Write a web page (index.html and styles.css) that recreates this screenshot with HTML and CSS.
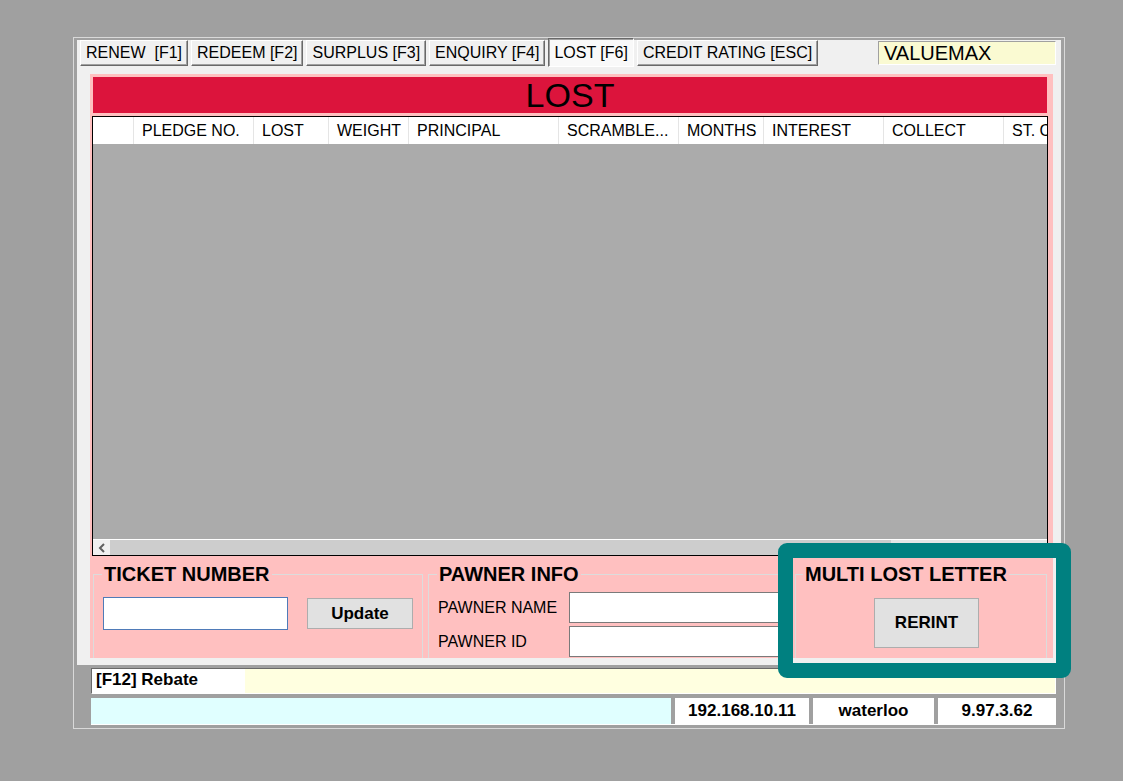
FILE: index.html
```html
<!DOCTYPE html>
<html>
<head>
<meta charset="utf-8">
<title>LOST</title>
<link rel="stylesheet" href="styles.css">
</head>
<body>
<div class="window">
  <div class="tabctl">
    <div class="tabstrip">
      <div class="tab">RENEW  [F1]</div>
      <div class="tab">REDEEM [F2]</div>
      <div class="tab">SURPLUS [F3]</div>
      <div class="tab">ENQUIRY [F4]</div>
      <div class="tab active">LOST [F6]</div>
      <div class="tab">CREDIT RATING [ESC]</div>
      <div class="brand">VALUEMAX</div>
    </div>
    <div class="page">
      <div class="panel">
        <div class="title">LOST</div>
        <div class="grid">
          <div class="ghead">
            <div class="col c0"></div>
            <div class="col c1">PLEDGE NO.</div>
            <div class="col c2">LOST</div>
            <div class="col c3">WEIGHT</div>
            <div class="col c4">PRINCIPAL</div>
            <div class="col c5">SCRAMBLE...</div>
            <div class="col c6">MONTHS</div>
            <div class="col c7">INTEREST</div>
            <div class="col c8">COLLECT</div>
            <div class="col c9">ST. CODE</div>
          </div>
          <div class="gbody"></div>
          <div class="hscroll">
            <div class="sarrow">
              <svg width="8" height="10" viewBox="0 0 8 10"><polyline points="6,1 2,5 6,9" fill="none" stroke="#606060" stroke-width="2"/></svg>
            </div>
            <div class="sthumb"></div>
            <div class="strack"></div>
          </div>
        </div>
        <div class="groups">
          <fieldset class="grp g-ticket">
            <legend>TICKET NUMBER</legend>
            <div class="ticket-row">
              <input class="ticket-input" type="text">
              <button class="btn btn-update">Update</button>
            </div>
          </fieldset>
          <fieldset class="grp g-pawner">
            <legend>PAWNER INFO</legend>
            <div class="field-row">
              <span class="flabel">PAWNER NAME</span>
              <input class="finput" type="text">
            </div>
            <div class="field-row">
              <span class="flabel">PAWNER ID</span>
              <input class="finput" type="text">
            </div>
          </fieldset>
          <fieldset class="grp g-multi">
            <legend>MULTI LOST LETTER</legend>
            <button class="btn btn-rerint">RERINT</button>
          </fieldset>
        </div>
      </div>
    </div>
  </div>
  <div class="status1">
    <div class="rebate">[F12] Rebate</div>
    <div class="note"></div>
  </div>
  <div class="status2">
    <div class="msg"></div>
    <div class="cell cell-ip">192.168.10.11</div>
    <div class="cell cell-branch">waterloo</div>
    <div class="cell cell-ver">9.97.3.62</div>
  </div>
</div>
<div class="highlight"></div>
</body>
</html>
```

FILE: styles.css
```css
* { box-sizing: border-box; }
html, body { margin: 0; padding: 0; }
body {
  background: #a0a0a0;
  font-family: "Liberation Sans", Arial, sans-serif;
  width: 1123px;
  height: 781px;
  overflow: hidden;
  position: relative;
  color: #000;
}

.window {
  margin: 37px 0 0 73px;
  width: 992px;
  height: 692px;
  border: 1px solid #d9d9d9;
  padding: 2px 3px 0 3px;
}

.tabctl {
  background: #f0f0f0;
  height: 625px;
  display: flex;
  flex-direction: column;
}

.tabstrip {
  height: 27px;
  display: flex;
  align-items: flex-start;
  padding-left: 3px;
  gap: 3px;
}

.tab {
  height: 26px;
  padding: 0 5px;
  font-size: 16px;
  line-height: 24px;
  white-space: pre;
  background: #f0f0f0;
  border: 1px solid;
  border-color: #ffffff #696969 #696969 #ffffff;
  box-shadow: inset -1px -1px 0 #a0a0a0;
}

.tab.active {
  margin-top: -2px;
  height: 29px;
  line-height: 27px;
  background: #f9f9f9;
  border-color: #696969 #ffffff #ffffff #696969;
  box-shadow: inset 1px 1px 0 #a0a0a0;
}

.brand {
  margin-left: auto;
  margin-right: 5px;
  margin-top: 1px;
  width: 178px;
  height: 24px;
  background: #fafad2;
  border: 1px solid;
  border-color: #a0a0a0 #ffffff #ffffff #a0a0a0;
  font-size: 20px;
  line-height: 23px;
  padding-left: 5px;
}

.page {
  flex: 1;
  padding: 7px 8px 7px 13px;
}

.panel {
  background: #ffc0c0;
  height: 584px;
  padding: 3px 5px 0 2px;
  display: flex;
  flex-direction: column;
}

.title {
  background: #dc143c;
  margin: 0 1px;
  height: 36px;
  font-size: 34px;
  line-height: 37px;
  text-align: center;
}

.grid {
  margin-top: 3px;
  height: 440px;
  border: 1px solid #000;
  display: flex;
  flex-direction: column;
  overflow: hidden;
}

.ghead {
  height: 27px;
  background: #ffffff;
  display: flex;
  flex: none;
  white-space: nowrap;
}

.col {
  flex: none;
  height: 27px;
  border-right: 1px solid #e5e5e5;
  font-size: 16px;
  line-height: 28px;
  padding-left: 8px;
  overflow: hidden;
}
.c0 { width: 41px; }
.c1 { width: 120px; }
.c2 { width: 75px; }
.c3 { width: 80px; }
.c4 { width: 150px; }
.c5 { width: 120px; }
.c6 { width: 85px; }
.c7 { width: 120px; }
.c8 { width: 120px; }
.c9 { width: 120px; border-right: none; }

.gbody {
  height: 395px;
  background: #ababab;
  flex: none;
}

.hscroll {
  height: 16px;
  border-top: 1px solid #ffffff;
  display: flex;
  flex: none;
}
.sarrow {
  width: 17px;
  background: #f0f0f0;
  display: flex;
  align-items: center;
  justify-content: center;
}
.sarrow svg { display: block; }
.sthumb {
  width: 781px;
  background: #cdcdcd;
}
.strack {
  flex: 1;
  background: #e6e6e6;
}

.groups {
  display: flex;
  padding-top: 8px;
  padding-left: 1px;
  gap: 5px;
  height: 102px;
}

.grp {
  margin: 0;
  padding: 0;
  min-width: 0;
  height: 94px;
  border: 1px solid #dcdcdc;
  border-bottom: none;
}
.grp legend {
  font-size: 20px;
  font-weight: bold;
  line-height: 20px;
  padding: 0 2px;
  margin-left: -1px;
}

.g-ticket { width: 330px; padding-left: 9px; }
.g-pawner { width: 362px; padding-left: 9px; }
.g-multi { width: 252px; }
.g-multi legend { margin-left: 7px; }

.ticket-row {
  margin-top: 13px;
  display: flex;
  align-items: center;
  gap: 19px;
}

.ticket-input {
  width: 185px;
  height: 33px;
  border: 1px solid #4f7bb8;
  background: #fff;
  margin: 0;
  padding: 0 4px;
  font: 16px "Liberation Sans", Arial, sans-serif;
}

.btn {
  margin: 0;
  padding: 0;
  background: #e1e1e1;
  border: 1px solid #adadad;
  font-family: "Liberation Sans", Arial, sans-serif;
  font-weight: bold;
  font-size: 17px;
  color: #000;
}
.btn-update { width: 106px; height: 31px; }
.btn-rerint { width: 105px; height: 50px; margin: 14px 0 0 78px; display: block; }

.field-row {
  display: flex;
  align-items: center;
  height: 31px;
}
.field-row:first-of-type { margin-top: 8px; }
.field-row + .field-row { margin-top: 3px; }
.flabel {
  width: 131px;
  font-size: 16px;
  padding-top: 1px;
}
.finput {
  width: 214px;
  height: 31px;
  margin: 0;
  border: 1px solid #7a7a7a;
  background: #fff;
  padding: 0 4px;
  font: 16px "Liberation Sans", Arial, sans-serif;
}

.status1 {
  margin: 3px 0 0 14px;
  width: 965px;
  height: 26px;
  display: flex;
  border: 1px solid;
  border-color: #696969 #ffffff #ffffff #696969;
}
.rebate {
  width: 153px;
  background: #ffffff;
  font-size: 17px;
  font-weight: bold;
  line-height: 22px;
  padding-left: 4px;
}
.note {
  flex: 1;
  background: #ffffe0;
}

.status2 {
  margin: 4px 0 0 14px;
  width: 965px;
  height: 27px;
  display: flex;
  border-bottom: 1px solid #ffffff;
}
.msg {
  width: 580px;
  background: #e0ffff;
  margin-right: 4px;
}
.cell {
  background: #ffffff;
  font-size: 17px;
  font-weight: bold;
  line-height: 26px;
  text-align: center;
}
.cell-ip { width: 134px; margin-right: 4px; }
.cell-branch { width: 121px; margin-right: 4px; }
.cell-ver { flex: 1; }

.highlight {
  position: absolute;
  left: 778px;
  top: 543px;
  width: 293px;
  height: 135px;
  border: 15px solid #008080;
  border-radius: 9px;
}
```
